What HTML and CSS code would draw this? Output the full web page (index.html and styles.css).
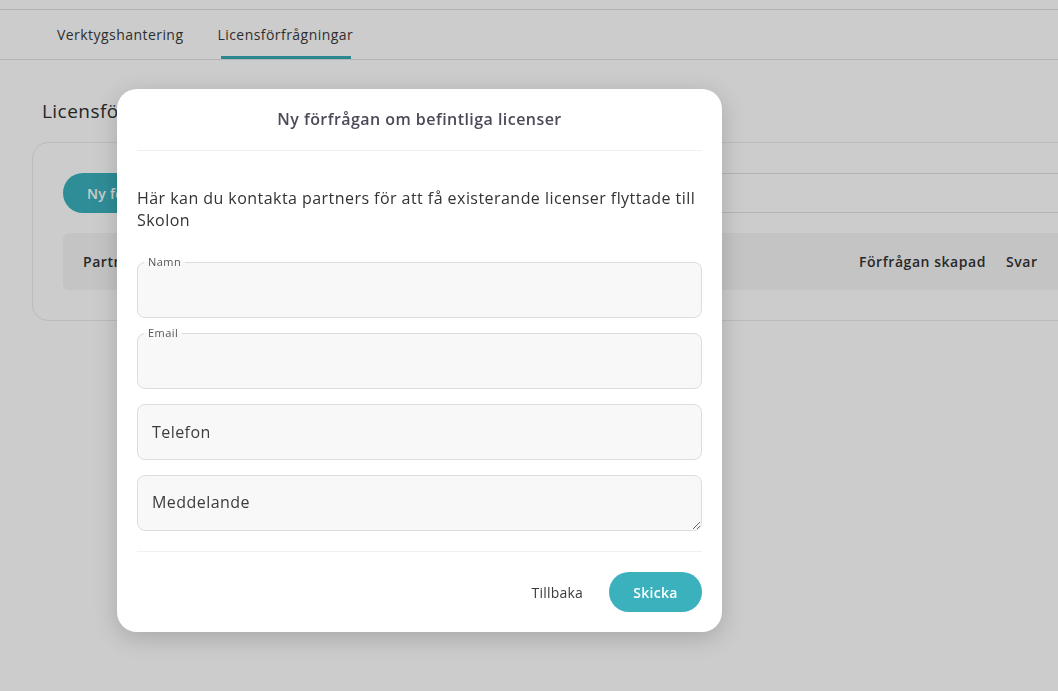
FILE: index.html
```html
<!DOCTYPE html>
<html>
  <head>
    <link rel="stylesheet" href="styles.css">
    <title>Licensförfrågningar</title>
  </head>
  <body>
    <div id="div_page">
      <div class="topbar"></div>
      <nav class="tabs">
        <a class="tab">Verktygshantering</a>
        <a class="tab tab_active">Licensförfrågningar</a>
      </nav>

      <div class="content">
        <h1 class="page_title">Licensförfrågningar</h1>
        <div class="card">
          <div class="toolbar">
            <button class="btn_primary">Ny förfrågan</button>
            <input class="in_search" type="text"/>
          </div>
          <div class="table_head">
            <span>Partner</span>
            <span>Förfrågan skapad</span>
            <span>Svar</span>
          </div>
        </div>
      </div>
    </div>

    <div class="overlay"></div>

    <div class="modal">
      <div class="modal_head">Ny förfrågan om befintliga licenser</div>
      <div class="modal_body">
        <p class="modal_text">Här kan du kontakta partners för att få existerande licenser flyttade till Skolon</p>
        <fieldset class="field field_label">
          <legend>Namn</legend>
          <input type="text"/>
        </fieldset>
        <fieldset class="field field_label">
          <legend>Email</legend>
          <input type="text"/>
        </fieldset>
        <div class="field">
          <input type="text" placeholder="Telefon"/>
        </div>
        <div class="field">
          <textarea placeholder="Meddelande"></textarea>
        </div>
      </div>
      <div class="modal_foot">
        <button class="btn_text">Tillbaka</button>
        <button class="btn_primary btn_send">Skicka</button>
      </div>
    </div>
  </body>
</html>
```

FILE: styles.css
```css
      body {
        margin: 0;
        background-color: #ffffff;
        color: #333333;
        font-family: "Open Sans", "Liberation Sans", sans-serif;
        letter-spacing: 0.45px;
        overflow: hidden;
        height: 691px;
      }

      .topbar {
        height: 9px;
        border-bottom: 1px solid #e1e1e1;
      }

      .tabs {
        display: flex;
        gap: 26px;
        height: 49px;
        padding-left: 53px;
        border-bottom: 1px solid #e1e1e1;
      }

      .tab {
        position: relative;
        display: flex;
        align-items: center;
        padding: 0 4px;
        font-size: 14px;
        color: #3a3a3a;
      }

      .tab_active::after {
        content: "";
        position: absolute;
        left: 8px;
        right: 6px;
        bottom: 0;
        height: 3px;
        background-color: #36a9b3;
      }

      .content {
        padding-left: 32px;
      }

      .page_title {
        margin: 38px 0 0 10px;
        height: 44px;
        font-size: 19px;
        font-weight: 400;
        color: #2e2e2e;
      }

      .card {
        width: 1100px;
        padding: 30px;
        border: 1px solid #ebebeb;
        border-radius: 16px;
      }

      .toolbar {
        display: flex;
        height: 40px;
      }

      .btn_primary {
        height: 40px;
        padding: 0 24px;
        border: none;
        border-radius: 20px;
        background-color: #3bb1bd;
        color: #ffffff;
        font-family: inherit;
        font-size: 14px;
        font-weight: 600;
        letter-spacing: 0.3px;
      }

      .in_search {
        margin-left: auto;
        width: 560px;
        height: 40px;
        box-sizing: border-box;
        border: 1px solid #e2e2e2;
        border-radius: 8px;
      }

      .table_head {
        display: grid;
        grid-template-columns: 776px 147px 1fr;
        align-items: center;
        margin-top: 20px;
        height: 57px;
        padding-left: 20px;
        border-radius: 6px;
        background-color: #f5f5f5;
        font-size: 14px;
        font-weight: 600;
        letter-spacing: 0.55px;
        color: #333333;
      }

      .overlay {
        position: fixed;
        inset: 0;
        background-color: rgba(0, 0, 0, 0.2);
      }

      .modal {
        position: absolute;
        left: 117px;
        top: 89px;
        width: 605px;
        box-sizing: border-box;
        padding: 0 20px;
        border-radius: 20px;
        background-color: #ffffff;
        box-shadow: 0 6px 24px rgba(0, 0, 0, 0.18);
      }

      .modal_head {
        padding: 18px 0 19px 0;
        line-height: 24px;
        text-align: center;
        font-size: 16px;
        font-weight: 600;
        color: #4a4a58;
        border-bottom: 1px solid #f0f0f0;
      }

      .modal_body {
        display: flex;
        flex-direction: column;
        padding-bottom: 20px;
        border-bottom: 1px solid #f0f0f0;
      }

      .modal_text {
        margin: 36px 0 25px 0;
        font-size: 16px;
        line-height: 22px;
        color: #333333;
      }

      .field {
        margin: 15px 0 0 0;
        padding: 0;
        border: 1px solid #dddddd;
        border-radius: 8px;
        background-color: #f8f8f8;
      }

      .field_label {
        margin-top: 9px;
        padding: 0 6px;
      }

      .modal_text + .field_label {
        margin-top: 0;
      }

      .field legend {
        padding: 0 4px;
        font-size: 11px;
        line-height: 12px;
        color: #555555;
      }

      .field input,
      .field textarea {
        display: block;
        width: 100%;
        box-sizing: border-box;
        height: 54px;
        margin: 0;
        padding: 0 14px;
        border: none;
        border-radius: 8px;
        background: transparent;
        font-family: inherit;
        font-size: 16px;
        letter-spacing: 0.45px;
        color: #333333;
        outline: none;
      }

      .field_label input {
        height: 49px;
      }

      .field textarea {
        padding-top: 15px;
        resize: vertical;
        line-height: 22px;
      }

      .field input::placeholder,
      .field textarea::placeholder {
        color: #3c3c3c;
      }

      .modal_foot {
        display: flex;
        justify-content: flex-end;
        align-items: center;
        gap: 18px;
        padding: 20px 0;
      }

      .btn_text {
        padding: 8px;
        border: none;
        background: none;
        font-family: inherit;
        font-size: 14px;
        letter-spacing: 0.2px;
        color: #3a3a3a;
      }

      .btn_send {
        width: 93px;
        padding: 0;
      }
```
